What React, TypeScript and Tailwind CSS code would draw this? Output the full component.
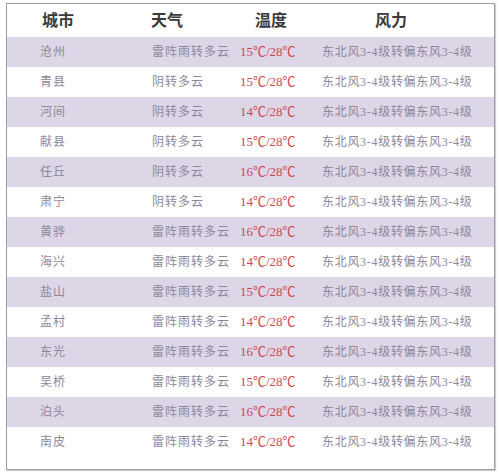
const rows = [
  { city: "沧州", weather: "雷阵雨转多云", low: 15 },
  { city: "青县", weather: "阴转多云", low: 15 },
  { city: "河间", weather: "阴转多云", low: 14 },
  { city: "献县", weather: "阴转多云", low: 15 },
  { city: "任丘", weather: "阴转多云", low: 16 },
  { city: "肃宁", weather: "阴转多云", low: 14 },
  { city: "黄骅", weather: "雷阵雨转多云", low: 16 },
  { city: "海兴", weather: "雷阵雨转多云", low: 14 },
  { city: "盐山", weather: "雷阵雨转多云", low: 15 },
  { city: "孟村", weather: "雷阵雨转多云", low: 14 },
  { city: "东光", weather: "雷阵雨转多云", low: 16 },
  { city: "吴桥", weather: "雷阵雨转多云", low: 15 },
  { city: "泊头", weather: "雷阵雨转多云", low: 16 },
  { city: "南皮", weather: "雷阵雨转多云", low: 14 },
];

const cols = "grid grid-cols-[145px_88px_82px_1fr] items-center";

export default function App() {
  return (
    <div className="w-[500px] h-[472px] bg-white pt-[3px] pl-[6px] font-['Liberation_Serif','Noto_Sans_CJK_SC',serif]">
      <div className="w-[489px] h-[467px] border border-[#9c9c9c] bg-white shadow-[1px_1px_1px_rgba(0,0,0,0.2)]">
        {/* header */}
        <div className={`${cols} h-[33px] text-[16px] font-bold text-[#3a3a3a]`}>
          <div className="pl-[35px]">城市</div>
          <div className="-ml-px">天气</div>
          <div className="pl-[15px]">温度</div>
          <div className="pl-[53px]">风力</div>
        </div>

        {rows.map((r, i) => (
          <div
            key={r.city}
            className={`${cols} h-[30px] text-[12px] tracking-[1px] text-[#8d879c] ${
              i % 2 === 0 ? "bg-[#dcd6e7]" : "bg-white"
            }`}
          >
            <div className="pl-[33px]">{r.city}</div>
            <div>{r.weather}</div>
            <div className="text-[13px] tracking-normal text-[#cc4848]">
              {r.low}℃/28℃
            </div>
            <div className="tracking-[0.7px]">东北风3-4级转偏东风3-4级</div>
          </div>
        ))}
      </div>
    </div>
  );
}
